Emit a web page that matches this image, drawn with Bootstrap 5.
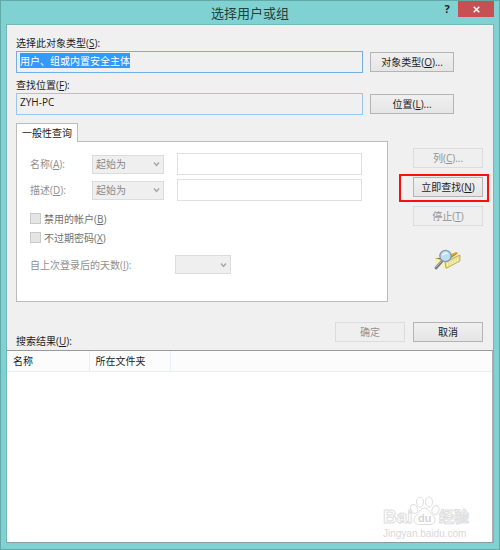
<!DOCTYPE html>
<html lang="zh-CN">
<head>
<meta charset="utf-8">
<meta name="viewport" content="width=device-width, initial-scale=1">
<title>选择用户或组</title>
<link rel="stylesheet" href="https://cdn.jsdelivr.net/npm/bootstrap@5.3.0/dist/css/bootstrap.min.css">
<style>
body { font-family: "Open Sans", "Noto Sans CJK SC", sans-serif; font-size: 10px; line-height: 14px; color: #1c1c1c; background: #7fd2d1; }
u { text-underline-offset: 1px; }
.dialog-frame { border: 1px solid #63a9a8; padding: 0 5px 6px; }
.title-bar { height: 23px; }
.title-bar h1 { font-size: 13px; line-height: 18px; color: #26403f; padding-top: 3px; }
.title-tools { top: 0; right: 0; }
.title-tools button { border: 0; border-radius: 0; padding: 0; line-height: 16px; height: 16px; }
.help-btn { width: 22px; font-size: 11px; font-weight: 700; color: #222; background: none; }
.close-btn { width: 36px; background: #c85052; }
.close-btn svg { display: block; margin: 0 auto; }
.dialog-body { background: #f0f0f0; border: 1px solid #73b9b7; border-bottom-color: #8a9c9c; }
.form-area { padding: 11px 4px 0 9px; }
.field-label { line-height: 14px; margin-bottom: 1px; }
.field-row { margin-right: 35px; gap: 7px; margin-bottom: 5px; }
.form-control, .form-select { font-size: 10px; line-height: 14px; border-radius: 0; min-height: 0; box-shadow: none; color: #1c1c1c; }
.target-box, .target-box:focus { height: 22px; padding: 1px 3px 5px; border: 1px solid #9cc5f0; background: #f0f0f0; box-shadow: none; color: #1c1c1c; }
.target-box:focus { border-color: #74aeea; }
.target-box::selection { background: #3399ff; color: #fff; }
.dlg-btn { width: 70px; height: 20px; padding: 0; font-size: 10px; line-height: 16px; border: 1px solid #b4b4b4; border-radius: 0; color: #1c1c1c; background: linear-gradient(#f0f0f0, #e5e5e5); }
.dlg-btn:disabled { color: #929292; border-color: #dcdcdc; background: #efefef; opacity: 1; }
.wide-btn { width: 84px; }
.query-area { padding-top: 3px; }
.query-tab { border: 1px solid #bcbcbc; border-bottom: 0; border-radius: 0; background: #fff; height: 19px; width: 62px; padding: 0; margin-bottom: -1px; font-size: 10px; line-height: 17px; color: #1c1c1c; }
.query-panel { border: 1px solid #bcbcbc; background: #fff; height: 161px; padding: 11px 25px 0 13px; color: #909090; }
.query-row { height: 22px; margin-bottom: 4px; }
.query-row > label { width: 62px; }
.form-select:disabled { width: 72px; height: 19px; padding: 0 14px 0 3px; border: 1px solid #dcdcdc; color: #888; background-color: #efefef; background-position: right 3px center; background-size: 7px 6px; background-image: url("data:image/svg+xml,%3Csvg xmlns='http://www.w3.org/2000/svg' viewBox='0 0 7 6'%3E%3Cpath d='M1 1.5 3.5 4.5 6 1.5' fill='none' stroke='%23a5a5a5' stroke-width='1.4'/%3E%3C/svg%3E"); }
.form-select.days-select:disabled { width: 56px; }
.query-row .form-control { height: 22px; margin-left: 13px; padding: 0 3px; border: 1px solid #dfdfdf; background: #fff; }
.check-row { height: 19px; color: #707070; gap: 3px; }
.check-row .form-check-input { width: 11px; height: 11px; margin: 0; border: 1px solid #cacaca; border-radius: 0; background: #e5e5e5; opacity: 1; }
.check-row .form-check-input:disabled ~ .form-check-label { opacity: 1; }
.days-row { margin-top: 8px; }
.days-row > label { width: 145px; }
.side-buttons { width: 90px; padding-top: 28px; }
.side-buttons .dlg-btn { margin-left: 14px; }
.find-mark { border: 2px solid #fa0f0f; margin: 6px 0 4px; padding: 1px 0 3px; }
.side-buttons .find-mark .dlg-btn { margin-left: 12px; }
.search-icon { margin: 23px 0 0 35px; }
.side-gap { width: 11px; }
.action-row { padding-top: 20px; gap: 8px; margin-right: 6px; }
.result-label { margin-top: -8px; margin-bottom: 2px; }
.result-list { border-top: 1px solid #9a9a9a; border-right: 1px solid #b0b0b0; background: #fff; }
.result-list table { --bs-table-color: #1c1c1c; margin: 0; table-layout: fixed; }
.result-list th { height: 20px; padding: 0 6px; font-weight: 400; line-height: 14px; background: #fcfcfc; border-bottom: 1px solid #e5eff8; border-right: 1px solid #e5eff8; vertical-align: middle; }
.result-list th:last-child { border-right: 0; }
.name-col { width: 82px; }
.folder-col { width: 81px; }
.watermark { right: 19px; bottom: 2px; }
</style>
</head>
<body>
<main class="dialog-frame min-vh-100 d-flex flex-column">
  <header class="title-bar position-relative text-center">
    <h1 class="m-0 fw-normal">选择用户或组</h1>
    <div class="title-tools position-absolute d-flex">
      <button class="help-btn" type="button" aria-label="帮助">?</button>
      <button class="close-btn" type="button" aria-label="关闭">
        <svg width="7" height="7" viewBox="0 0 7 7"><path d="M.7.7 6.3 6.3M6.3.7.7 6.3" stroke="#fff" stroke-width="1.5"/></svg>
      </button>
    </div>
  </header>
  <div class="dialog-body flex-grow-1 d-flex flex-column">
    <form class="form-area" onsubmit="return false">
      <label class="field-label d-block" for="objType">选择此对象类型(<u>S</u>):</label>
      <div class="field-row d-flex align-items-center">
        <input class="form-control target-box" id="objType" type="text" value="用户、组或内置安全主体" readonly>
        <button class="btn dlg-btn wide-btn flex-shrink-0" type="button">对象类型(<u>O</u>)...</button>
      </div>
      <label class="field-label d-block" for="location">查找位置(<u>F</u>):</label>
      <div class="field-row d-flex align-items-center">
        <input class="form-control target-box" id="location" type="text" value="ZYH-PC" readonly>
        <button class="btn dlg-btn wide-btn flex-shrink-0" type="button">位置(<u>L</u>)...</button>
      </div>
      <div class="d-flex">
        <section class="query-area flex-grow-1">
          <button class="query-tab position-relative d-block" type="button" role="tab" aria-selected="true">一般性查询</button>
          <div class="query-panel">
            <div class="query-row d-flex align-items-center">
              <label class="flex-shrink-0" for="nameMode">名称(<u>A</u>):</label>
              <select class="form-select flex-shrink-0" id="nameMode" disabled><option>起始为</option></select>
              <input class="form-control" type="text" aria-label="名称" disabled>
            </div>
            <div class="query-row d-flex align-items-center">
              <label class="flex-shrink-0" for="descMode">描述(<u>D</u>):</label>
              <select class="form-select flex-shrink-0" id="descMode" disabled><option>起始为</option></select>
              <input class="form-control" type="text" aria-label="描述" disabled>
            </div>
            <div class="pt-1">
              <div class="check-row d-flex align-items-center">
                <input class="form-check-input" type="checkbox" id="disabledAcc" disabled>
                <label class="form-check-label" for="disabledAcc">禁用的帐户(<u>B</u>)</label>
              </div>
              <div class="check-row d-flex align-items-center">
                <input class="form-check-input" type="checkbox" id="noExpire" disabled>
                <label class="form-check-label" for="noExpire">不过期密码(<u>X</u>)</label>
              </div>
            </div>
            <div class="days-row d-flex align-items-center">
              <label for="days">自上次登录后的天数(<u>I</u>):</label>
              <select class="form-select days-select" id="days" disabled><option></option></select>
            </div>
          </div>
        </section>
        <div class="side-gap flex-shrink-0"></div>
        <div class="side-buttons flex-shrink-0">
          <button class="btn dlg-btn d-block" type="button" disabled>列(<u>C</u>)...</button>
          <div class="find-mark"><button class="btn dlg-btn d-block" type="button">立即查找(<u>N</u>)</button></div>
          <button class="btn dlg-btn d-block" type="button" disabled>停止(<u>T</u>)</button>
          <svg class="search-icon d-block" width="27" height="21" viewBox="0 0 27 21">
            <path d="M1 9.5 13 5l13 1v5.5L13 19 1 16z" fill="#efe69a"/>
            <path d="M1 9h9L22 3.500l2 .8L12 12z" fill="#8c7a20"/>
            <path d="M14 6.500 22 3l2 1L14 9z" fill="#e3a72c"/>
            <path d="M1 10 11 13v6L1 16.500z" fill="#f7f2bd"/>
            <path d="M11 13 26 6v6L12 19.500z" fill="#e9df8e" stroke="#a89a48" stroke-width=".7"/>
            <path d="M13.500 14v3M16 13v3M18.500 11.800v3M21 10.600v3M23.500 9.400v3" stroke="#fbf7c8" stroke-width=".9"/>
            <path d="M8.200 11.800 2 19" stroke="#717880" stroke-width="2.800" stroke-linecap="round"/>
            <path d="M7.500 12 2 18.300" stroke="#b9c0c8" stroke-width="1" stroke-linecap="round"/>
            <circle cx="11.500" cy="7" r="5.600" fill="#bcdff3" stroke="#8499ad" stroke-width="1.300"/>
            <path d="M8 7q.5-3 3.500-3.500 2 0 3 1Q11 4.500 8 7" fill="#f5fcff"/>
          </svg>
        </div>
      </div>
      <div class="action-row d-flex justify-content-end">
        <button class="btn dlg-btn" type="button" disabled>确定</button>
        <button class="btn dlg-btn" type="button">取消</button>
      </div>
      <div class="result-label" id="resultLabel">搜索结果(<u>U</u>):</div>
    </form>
    <section class="result-list position-relative flex-grow-1">
      <table class="table table-borderless" aria-labelledby="resultLabel">
        <colgroup><col class="name-col"><col class="folder-col"><col></colgroup>
        <thead><tr><th scope="col">名称</th><th scope="col">所在文件夹</th><th></th></tr></thead>
      </table>
      <svg class="watermark position-absolute" width="94" height="46" viewBox="0 0 94 46" font-family="Liberation Sans, Noto Sans CJK SC, sans-serif">
        <g fill="#fff" stroke="#dedede">
          <ellipse cx="35" cy="15" rx="3.500" ry="4.500" transform="rotate(-20 35 15)"/>
          <ellipse cx="41" cy="8" rx="3.500" ry="5"/>
          <ellipse cx="50" cy="8" rx="3.500" ry="5"/>
          <ellipse cx="56.500" cy="16" rx="3.500" ry="4.500" transform="rotate(20 56.500 16)"/>
          <path d="M45.500 14c4 0 5 4.500 8 7 4 4 3 9-2 9.500H39.500c-5-.5-6-5.500-2-9.500 3-2.500 4-7 8-7z"/>
          <text x="4" y="29" font-size="19" font-weight="700">Bai</text>
          <text x="60" y="28" font-size="15" font-weight="700">经验</text>
        </g>
        <text x="39" y="28" font-size="11" font-weight="700" fill="#d4d4d4">du</text>
        <text x="4" y="43" font-size="10" fill="#d8d8d8">Jingyan.baidu.com</text>
      </svg>
    </section>
  </div>
</main>
<script src="https://cdn.jsdelivr.net/npm/bootstrap@5.3.0/dist/js/bootstrap.bundle.min.js"></script>
<script>
const objType = document.getElementById('objType');
objType.focus();
objType.select();
</script>
</body>
</html>
